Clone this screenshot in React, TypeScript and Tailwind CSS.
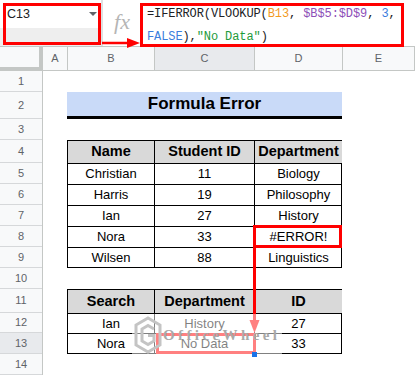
import clsx from 'clsx'

const ROW_NUMBERS = ['1', '2', '3', '4', '5', '6', '7', '8', '9', '10', '11', '12', '13', '14']
const COLUMNS = [
  { label: 'A', w: 'w-[25px]' },
  { label: 'B', w: 'w-[87px]' },
  { label: 'C', w: 'w-[100px]', active: true },
  { label: 'D', w: 'w-[88px]' },
  { label: 'E', w: 'flex-1' },
]

const STUDENTS = [
  ['Christian', '11', 'Biology'],
  ['Harris', '19', 'Philosophy'],
  ['Ian', '27', 'History'],
  ['Nora', '33', '#ERROR!'],
  ['Wilsen', '88', 'Linguistics'],
]

const SEARCHES = [
  ['Ian', 'History', '27'],
  ['Nora', 'No Data', '33'],
]

function Cell({ children, head }: { children: React.ReactNode; head?: boolean }) {
  return (
    <div
      className={clsx(
        'flex items-center justify-center border-l border-t border-black text-black',
        head ? 'bg-[#d9d9d9] text-[14.5px] font-bold' : 'text-[13px]',
      )}
    >
      {children}
    </div>
  )
}

function FormulaBar() {
  return (
    <div className="flex h-[47px] border-b border-[#c4c7c5]">
      <div className="flex w-[103px] flex-col border-r-2 border-[#e0e0e0]">
        <div className="flex h-[28px] items-center justify-between bg-white pl-[7px] pr-[4px] text-[12.5px] text-[#202124]">
          <span>C13</span>
          <span className="h-0 w-0 border-x-[4px] border-t-[4px] border-x-transparent border-t-[#5f6368]" />
        </div>
        <div className="flex-1 bg-[#eeeeee]" />
      </div>
      <div className="flex w-[38px] justify-center bg-white pt-[11px]">
        <span className="font-['Liberation_Serif',serif] text-[22px] italic leading-none text-[#b5b5b5]">fx</span>
      </div>
      <div className="flex-1 bg-white pl-[6px] pt-[3px] font-['Liberation_Mono',monospace] text-[12px] leading-[23px] tracking-[-0.1px] text-[#202124]">
        <div>
          =IFERROR(VLOOKUP(<span className="text-[#f29a1f]">B13</span>, <span className="text-[#8e4fb8]">$B$5:$D$9</span>,{' '}
          <span className="text-[#3b7ddd]">3</span>,
        </div>
        <div>
          <span className="text-[#3b7ddd]">FALSE</span>),<span className="text-[#1e9b3c]">"No Data"</span>)
        </div>
      </div>
    </div>
  )
}

function ColumnHeaders() {
  return (
    <div className="flex h-[24px] text-[11px] text-[#5f6368]">
      <div className="w-[43px] border-b-4 border-r-4 border-[#c4c7c5] bg-[#f8f9fa]" />
      {COLUMNS.map((c) => (
        <div
          key={c.label}
          className={clsx(
            'flex items-center justify-center border-b border-r border-[#c4c7c5]',
            c.w,
            c.active ? 'bg-[#e8eaed]' : 'bg-[#f8f9fa]',
          )}
        >
          {c.label}
        </div>
      ))}
    </div>
  )
}

export default function App() {
  return (
    <div className="relative h-[375px] w-[415px] overflow-hidden bg-white font-['Liberation_Sans',Arial,sans-serif]">
      <FormulaBar />
      <ColumnHeaders />

      <div className="flex">
        <div className="grid w-[43px] grid-rows-[21px_27px_21px_23px_21px_21px_21px_21px_21px_21px_24px_20px_21px_21px] border-r border-[#c4c7c5] text-[11px] text-[#5f6368]">
          {ROW_NUMBERS.map((n) => (
            <div
              key={n}
              className={clsx(
                'flex items-center justify-center border-b border-[#d6d8da]',
                n === '13' ? 'bg-[#e8eaed]' : 'bg-[#f8f9fa]',
              )}
            >
              {n}
            </div>
          ))}
        </div>

        <div className="grid flex-1 grid-cols-[24px_87px_100px_88px_1fr] grid-rows-[21px_27px_21px_23px_21px_21px_21px_21px_21px_21px_24px_20px_21px_21px]">
          <div className="col-span-3 col-start-2 row-start-2 flex items-center justify-center border-b-[3px] border-black bg-[#c9daf8] text-[17px] font-bold text-black">
            Formula Error
          </div>

          <div className="col-span-3 col-start-2 row-span-6 row-start-4 grid grid-cols-[87px_100px_88px] grid-rows-[23px_21px_21px_21px_21px_21px] border-b border-r border-black">
            <Cell head>Name</Cell>
            <Cell head>Student ID</Cell>
            <Cell head>Department</Cell>
            {STUDENTS.map((row) => row.map((v, i) => <Cell key={row[0] + i}>{v}</Cell>))}
          </div>

          <div className="col-span-3 col-start-2 row-span-3 row-start-11 grid grid-cols-[87px_100px_88px] grid-rows-[24px_20px_21px] border-b border-r border-black">
            <Cell head>Search</Cell>
            <Cell head>Department</Cell>
            <Cell head>ID</Cell>
            {SEARCHES.map((row) => row.map((v, i) => <Cell key={row[0] + i}>{v}</Cell>))}
          </div>
        </div>
      </div>

      {/* annotations */}
      <div className="absolute left-[3px] top-[3px] h-[42px] w-[98px] border-[3px] border-[#ff0000]" />
      <div className="absolute left-[140px] top-[3px] h-[44px] w-[264px] border-[3px] border-[#ff0000]" />
      <svg className="absolute left-[100px] top-[36px]" width="42" height="14" viewBox="0 0 42 14">
        <line x1="2" y1="7" x2="30" y2="7" stroke="#ff0000" strokeWidth="2.5" />
        <polygon points="27,2 40,7 27,12" fill="#ff0000" />
      </svg>
      <div className="absolute left-[253px] top-[225px] h-[23px] w-[89px] border-[3px] border-[#ff0000]" />
      <svg className="absolute left-[246px] top-[247px]" width="16" height="87" viewBox="0 0 16 87">
        <line x1="8.5" y1="0" x2="8.5" y2="76" stroke="#ff0000" strokeWidth="3" />
        <polygon points="3.5,73 13.5,73 8.5,86" fill="#ff0000" />
      </svg>
      <div className="absolute left-[156px] top-[333px] h-[21px] w-[100px] border-[3px] border-[#ff0000]" />

      {/* watermark */}
      <div className="absolute left-[132px] top-[314px] flex h-[42px] w-[150px] items-center bg-white/50">
        <svg className="ml-[2px]" width="28" height="38" viewBox="0 0 28 38">
          <polygon points="14,2 26,9 26,29 14,36 2,29 2,9" fill="none" stroke="#c4c4c4" strokeWidth="3" />
          <path d="M20 13 L14 9.5 L8 13 V25 L14 28.5 L20 25 V19.5 H14" fill="none" stroke="#c4c4c4" strokeWidth="3" />
        </svg>
        <span className="ml-[1px] font-['Liberation_Serif',serif] text-[15px] font-bold tracking-[3.4px] text-[#a9a9a9]">
          OfficeWheel
        </span>
      </div>
      <div className="absolute left-[252px] top-[352px] h-[5px] w-[5px] bg-[#1a73e8]" />
    </div>
  )
}
